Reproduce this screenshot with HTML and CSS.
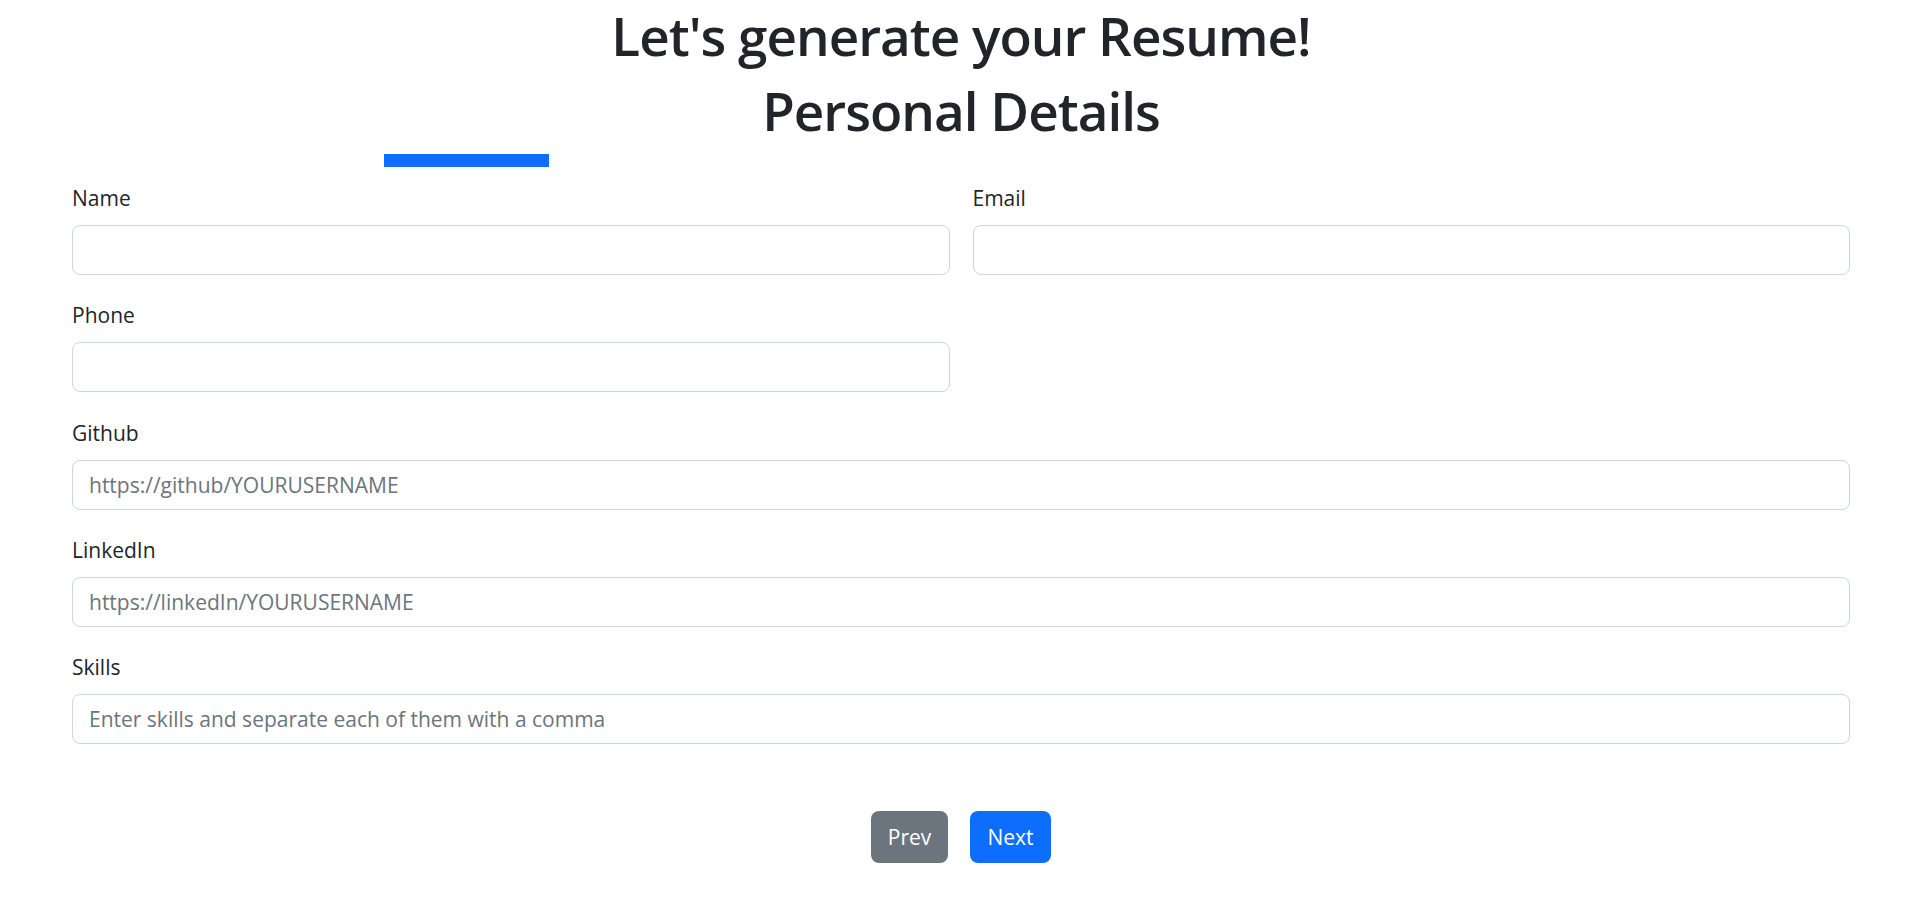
FILE: index.html
```
<!DOCTYPE html>
<html lang="en">
<head>
<meta charset="utf-8">
<title>Resume Generator</title>
<link rel="stylesheet" href="styles.css">
</head>
<body>
<main class="page">
  <h1 class="title">Let's generate your Resume!</h1>
  <h1 class="title">Personal Details</h1>
  <div class="progress"><div class="progress-bar"></div></div>
  <form class="form">
    <div class="row">
      <div class="field">
        <label class="label" for="name">Name</label>
        <input class="control" id="name" type="text">
      </div>
      <div class="field">
        <label class="label" for="email">Email</label>
        <input class="control" id="email" type="email">
      </div>
    </div>
    <div class="row">
      <div class="field">
        <label class="label" for="phone">Phone</label>
        <input class="control" id="phone" type="text">
      </div>
    </div>
    <div class="field">
      <label class="label" for="github">Github</label>
      <input class="control" id="github" type="text" placeholder="https://github/YOURUSERNAME">
    </div>
    <div class="field">
      <label class="label" for="linkedin">LinkedIn</label>
      <input class="control" id="linkedin" type="text" placeholder="https://linkedIn/YOURUSERNAME">
    </div>
    <div class="field">
      <label class="label" for="skills">Skills</label>
      <input class="control" id="skills" type="text" placeholder="Enter skills and separate each of them with a comma">
    </div>
  </form>
  <div class="actions">
    <button class="btn btn-prev" type="button">Prev</button>
    <button class="btn btn-next" type="button">Next</button>
  </div>
</main>
</body>
</html>
```

FILE: styles.css
```
* { box-sizing: border-box; }

html, body {
  margin: 0;
  background: #fff;
}

body {
  font-family: "Open Sans", "Noto Sans", sans-serif;
  color: #212529;
  font-size: 21px;
}

.page {
  padding: 0 68px 0 72px;
}

.title {
  margin: 0 0 3px;
  font-size: 53px;
  line-height: 72px;
  font-weight: 600;
  letter-spacing: -1px;
  text-align: center;
}

.title + .title {
  margin-bottom: 0;
}

.progress {
  margin-top: 7px;
  padding-left: 312px;
  height: 13px;
}

.progress-bar {
  width: 165px;
  height: 13px;
  background: #0d6efd;
}

.form {
  margin-top: 16px;
}

.row {
  display: grid;
  grid-template-columns: 1fr 1fr;
  column-gap: 23px;
}

.field {
  margin-bottom: 25.3px;
  display: flex;
  flex-direction: column;
}

.label {
  line-height: 30px;
  margin-bottom: 12px;
}

.control {
  height: 50px;
  border: 1px solid #ced4da;
  border-radius: 8px;
  padding: 0 16px;
  font: inherit;
  font-size: 21px;
  color: #212529;
  background: #fff;
}

.control::placeholder {
  color: #6c757d;
}

.actions {
  margin-top: 67px;
  display: flex;
  justify-content: center;
  gap: 22px;
}

.btn {
  height: 52px;
  border: none;
  border-radius: 8px;
  font: inherit;
  font-size: 21px;
  color: #fff;
  padding: 0;
  cursor: pointer;
}

.btn-prev {
  width: 77px;
  background: #6c757d;
}

.btn-next {
  width: 81px;
  background: #0d6efd;
}
```
